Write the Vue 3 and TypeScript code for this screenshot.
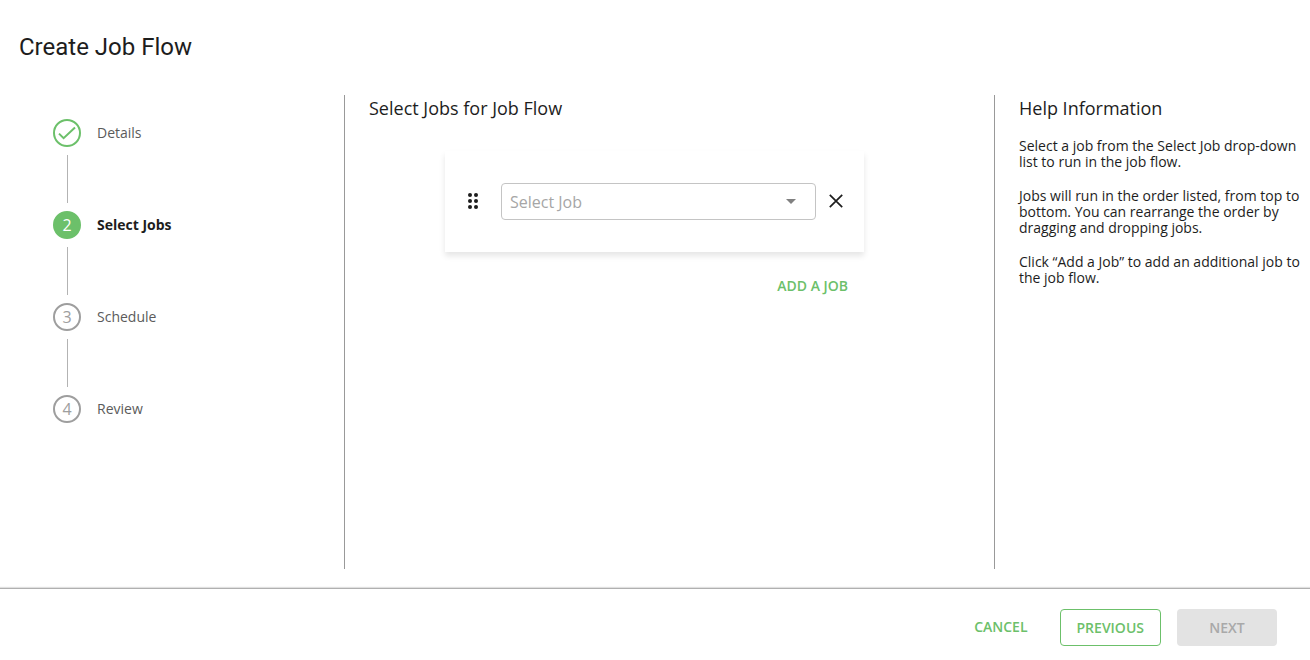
<script setup lang="ts">
import { ref } from 'vue'

type StepState = 'done' | 'active' | 'pending'

interface Step {
  label: string
  state: StepState
}

const steps: Step[] = [
  { label: 'Details', state: 'done' },
  { label: 'Select Jobs', state: 'active' },
  { label: 'Schedule', state: 'pending' },
  { label: 'Review', state: 'pending' },
]

const help: string[] = [
  'Select a job from the Select Job drop-down list to run in the job flow.',
  'Jobs will run in the order listed, from top to bottom. You can rearrange the order by dragging and dropping jobs.',
  'Click “Add a Job” to add an additional job to the job flow.',
]

const jobs = ref<{ id: number; value: string }[]>([{ id: 1, value: '' }])
let nextId = 2

function addJob(): void {
  jobs.value.push({ id: nextId++, value: '' })
}

function removeJob(id: number): void {
  jobs.value = jobs.value.filter((job) => job.id !== id)
}
</script>

<template>
  <div class="page">
    <header class="header">
      <h1 class="title">Create Job Flow</h1>
    </header>

    <main class="workspace">
      <nav class="steps" aria-label="Progress">
        <ol class="step-list">
          <li v-for="(step, i) in steps" :key="step.label" class="step" :class="step.state">
            <span class="marker">
              <svg v-if="step.state === 'done'" width="18" height="14" viewBox="0 0 18 14" aria-hidden="true">
                <path d="M1 7.6 5.6 12.2 17 1.4" fill="none" stroke="currentColor" stroke-width="2" />
              </svg>
              <template v-else>{{ i + 1 }}</template>
            </span>
            <span class="step-label">{{ step.label }}</span>
          </li>
        </ol>
      </nav>

      <section class="content">
        <h2 class="heading">Select Jobs for Job Flow</h2>
        <div class="job-area">
          <div v-for="job in jobs" :key="job.id" class="job-card">
            <button class="icon-button" type="button" aria-label="Reorder job">
              <svg width="12" height="18" viewBox="0 0 12 18" fill="currentColor" aria-hidden="true">
                <circle cx="3" cy="3" r="2" />
                <circle cx="9" cy="3" r="2" />
                <circle cx="3" cy="9" r="2" />
                <circle cx="9" cy="9" r="2" />
                <circle cx="3" cy="15" r="2" />
                <circle cx="9" cy="15" r="2" />
              </svg>
            </button>
            <div class="select-wrap">
              <select v-model="job.value" class="select" aria-label="Select Job">
                <option value="" disabled>Select Job</option>
              </select>
              <svg class="caret" width="10" height="5" viewBox="0 0 10 5" aria-hidden="true">
                <path d="M0 0h10L5 5z" fill="currentColor" />
              </svg>
            </div>
            <button class="icon-button" type="button" aria-label="Remove job" @click="removeJob(job.id)">
              <svg width="14" height="14" viewBox="0 0 14 14" aria-hidden="true">
                <path d="M.8.8 13.2 13.2M13.2.8.8 13.2" fill="none" stroke="currentColor" stroke-width="1.7" />
              </svg>
            </button>
          </div>
          <button class="text-button add" type="button" @click="addJob">ADD A JOB</button>
        </div>
      </section>

      <aside class="help">
        <h2 class="heading">Help Information</h2>
        <p v-for="text in help" :key="text">{{ text }}</p>
      </aside>
    </main>

    <footer class="footer">
      <button class="text-button" type="button">CANCEL</button>
      <button class="button outlined" type="button">PREVIOUS</button>
      <button class="button" type="button" disabled>NEXT</button>
    </footer>
  </div>
</template>

<style>
body {
  margin: 0;
  background: #fff;
}
</style>

<style scoped>
.page,
.page * {
  box-sizing: border-box;
}

.page {
  display: flex;
  flex-direction: column;
  min-height: 100vh;
  color: #1d1d1d;
  font-family: 'Open Sans', 'Noto Sans', sans-serif;
  font-size: 14px;
}

button,
select {
  margin: 0;
  font-family: inherit;
  cursor: pointer;
}

.header {
  padding: 30px 19px;
}

.title {
  margin: 0;
  font-family: Roboto, 'Open Sans', sans-serif;
  font-size: 24px;
  font-weight: 400;
  line-height: 35px;
}

.workspace {
  flex: 1;
  display: grid;
  grid-template-columns: 345px minmax(0, 1fr) 315px;
  margin-bottom: 19px;
}

.steps {
  padding: 24px 53px;
  border-right: 1px solid #999;
}

.step-list {
  display: flex;
  flex-direction: column;
  gap: 64px;
  margin: 0;
  padding: 0;
  list-style: none;
}

.step {
  position: relative;
  display: flex;
  align-items: center;
  gap: 16px;
  color: #5b5b5b;
  line-height: 20px;
}

.step:not(:last-child)::after {
  content: '';
  position: absolute;
  top: 36px;
  left: 14px;
  height: 48px;
  border-left: 1px solid #b3b3b3;
}

.marker {
  display: flex;
  align-items: center;
  justify-content: center;
  width: 28px;
  height: 28px;
  border: 2px solid #9e9e9e;
  border-radius: 50%;
  color: #9e9e9e;
  font-size: 16px;
}

.done .marker {
  border-color: #6cc06a;
  color: #6cc06a;
}

.active .marker {
  border-color: #6cc06a;
  background: #6cc06a;
  color: #fff;
  font-weight: 500;
}

.active .step-label {
  color: #1d1d1d;
  font-weight: 700;
}

.content {
  padding: 0 54px 0 24px;
  border-right: 1px solid #999;
}

.heading {
  margin: 0;
  font-size: 18px;
  font-weight: 400;
  line-height: 26px;
}

.job-area {
  display: flex;
  flex-direction: column;
  max-width: 419px;
  margin: 30px auto 0;
}

.job-card {
  display: flex;
  align-items: center;
  height: 101px;
  padding: 0 8px 0 16px;
  box-shadow: 0 4px 6px rgba(0, 0, 0, 0.1);
}

.icon-button {
  display: flex;
  align-items: center;
  justify-content: center;
  width: 40px;
  height: 40px;
  padding: 0 0 2px;
  border: 0;
  background: none;
  color: #1d1d1d;
}

.icon-button:first-child {
  justify-content: flex-start;
  padding-left: 6px;
}

.select-wrap {
  position: relative;
  flex: 1;
}

.select {
  display: block;
  width: 100%;
  height: 37px;
  padding: 0 32px 0 8px;
  border: 1px solid #c4c4c4;
  border-radius: 4px;
  background: #fff;
  color: #a6a6a6;
  font-size: 16px;
  appearance: none;
}

.caret {
  position: absolute;
  top: 16px;
  right: 20px;
  color: #808080;
  pointer-events: none;
}

.text-button {
  padding: 7px 16px 9px;
  border: 0;
  background: none;
  color: #6cc06a;
  font-size: 14px;
  font-weight: 600;
  line-height: 20px;
}

.add {
  align-self: flex-end;
  margin-top: 17px;
}

.help {
  padding: 0 8px 0 24px;
}

.help p {
  margin: 0 0 18px;
  line-height: 16px;
}

.help .heading {
  margin-bottom: 17px;
}

.footer {
  display: flex;
  align-items: center;
  justify-content: flex-end;
  gap: 16px;
  padding: 20px 33px 14px;
  border-top: 1px solid #b0b0b0;
  box-shadow: 0 -1px 1px rgba(0, 0, 0, 0.12);
}

.button {
  min-width: 100px;
  height: 37px;
  padding: 0 16px;
  border: 0;
  border-radius: 4px;
  background: #e3e3e3;
  color: #a9a9a9;
  font-size: 14px;
  font-weight: 600;
}

.outlined {
  border: 1px solid #6cc06a;
  background: #fff;
  color: #6cc06a;
}
</style>
